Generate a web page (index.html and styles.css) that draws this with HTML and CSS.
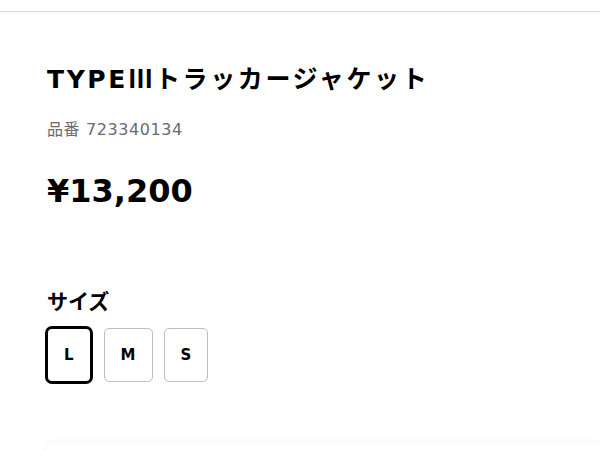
FILE: index.html
```html
<!DOCTYPE html>
<html lang="ja">
<head>
<meta charset="utf-8">
<link rel="stylesheet" href="styles.css">
</head>
<body>
<div class="topbar"></div>
<main class="product">
  <h1 class="title">TYPE<span class="numeral">Ⅲ</span>トラッカージャケット</h1>
  <p class="code">品番 723340134</p>
  <p class="price">¥13,200</p>
  <section class="sizes">
    <h2 class="sizes-label">サイズ</h2>
    <div class="size-list">
      <button class="size selected">L</button>
      <button class="size">M</button>
      <button class="size">S</button>
    </div>
  </section>
  <div class="card"></div>
</main>
</body>
</html>
```
FILE: styles.css
```css
html, body {
  margin: 0;
  padding: 0;
  background: #fff;
  font-family: "DejaVu Sans", "Noto Sans CJK JP", sans-serif;
  color: #000;
  overflow: hidden;
}
.topbar {
  height: 11px;
  border-bottom: 1px solid #dcdcdc;
  box-shadow: 0 1px 2px rgba(0,0,0,0.04);
}
.product {
  padding: 0 0 0 47px;
}
.title {
  margin: 0;
  padding-top: 51px;
  height: 34px;
  font-family: "DejaVu Sans", "Noto Sans CJK JP", sans-serif;
  font-size: 25px;
  line-height: 34px;
  font-weight: 700;
  letter-spacing: 2.6px;
}
.numeral {
  font-family: "Noto Sans CJK JP", sans-serif;
  line-height: 1;
  letter-spacing: 2px;
}
.code {
  margin: 21px 0 0;
  font-size: 16px;
  line-height: 24px;
  color: #6b6b6b;
  letter-spacing: 0.6px;
}
.price {
  margin: 29px 0 0;
  font-size: 32px;
  line-height: 40px;
  font-weight: 700;
}
.sizes {
  margin-top: 75px;
}
.sizes-label {
  margin: 0;
  font-family: "Noto Sans CJK JP", sans-serif;
  font-size: 21px;
  line-height: 28px;
  font-weight: 700;
}
.size-list {
  display: flex;
  align-items: center;
  gap: 11px;
  margin-top: 12px;
  margin-left: -2px;
}
.size {
  height: 54px;
  padding: 0 16px;
  background: #fff;
  border: 1px solid #bdbdbd;
  border-radius: 5px;
  font-family: "DejaVu Sans", "Noto Sans CJK JP", sans-serif;
  font-size: 15px;
  font-weight: 700;
  color: #000;
}
.size.selected {
  height: 58px;
  border: 3px solid #000;
  border-radius: 7px;
}
.card {
  margin-top: 59px;
  height: 40px;
  border-radius: 6px;
  background: #fff;
  box-shadow: 0 0 8px rgba(0,0,0,0.05);
}
```
